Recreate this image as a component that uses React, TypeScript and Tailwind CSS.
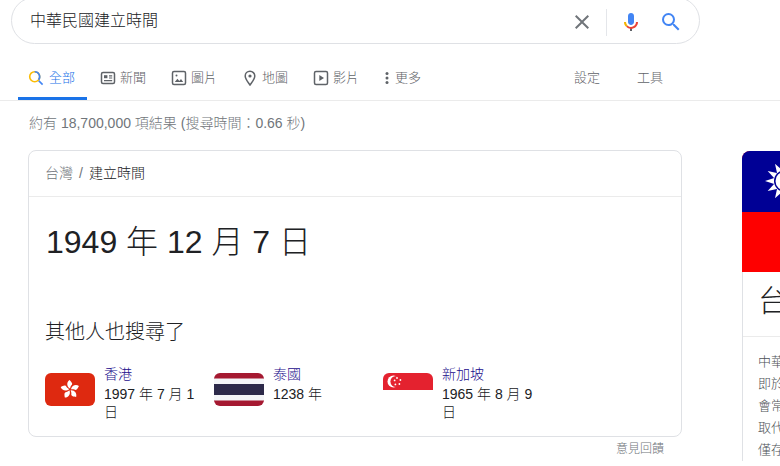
const FONT = '[font-family:Arial,"Liberation_Sans","Noto_Sans_CJK_TC",sans-serif]'

const tabs = [
  { label: '新聞', icon: <NewsIcon />, width: 'w-[71px]' },
  { label: '圖片', icon: <ImageIcon />, width: 'w-[71px]' },
  { label: '地圖', icon: <PinIcon />, width: 'w-[71px]' },
  { label: '影片', icon: <VideoIcon />, width: 'w-[71px]' },
]

function NewsIcon() {
  return (
    <svg width="16" height="16" viewBox="0 0 16 16" fill="none" stroke="#5f6368" strokeWidth="1.5">
      <rect x="1.5" y="2.5" width="13" height="11" rx="1.5" />
      <rect x="4" y="5.2" width="3.4" height="3" fill="#5f6368" stroke="none" />
      <path d="M9 5.8h3.2M9 8h3.2M4 10.6h8.2" strokeWidth="1.2" />
    </svg>
  )
}

function ImageIcon() {
  return (
    <svg width="16" height="16" viewBox="0 0 16 16" fill="none" stroke="#5f6368" strokeWidth="1.5">
      <rect x="1.5" y="1.5" width="13" height="13" rx="1.5" />
      <path d="M3.8 12l2.6-3.2 1.9 2.1 1.7-1.9 2.2 3z" fill="#5f6368" stroke="none" />
      <circle cx="5.5" cy="5.5" r="1" fill="#5f6368" stroke="none" />
    </svg>
  )
}

function PinIcon() {
  return (
    <svg width="16" height="16" viewBox="0 0 16 16" fill="none" stroke="#5f6368" strokeWidth="1.5">
      <path d="M8 15C5.6 11.6 3.2 9 3.2 6a4.8 4.8 0 0 1 9.6 0c0 3-2.4 5.6-4.8 9z" />
      <circle cx="8" cy="6" r="1.6" fill="#5f6368" stroke="none" />
    </svg>
  )
}

function VideoIcon() {
  return (
    <svg width="16" height="16" viewBox="0 0 16 16" fill="none" stroke="#5f6368" strokeWidth="1.5">
      <rect x="1.5" y="1.5" width="13" height="13" rx="1.5" />
      <path d="M6.3 5v6L11 8z" fill="#5f6368" stroke="none" />
    </svg>
  )
}

function HongKongFlag() {
  return (
    <svg width="50" height="33" viewBox="0 0 50 33" className="shrink-0 mt-[6px]">
      <rect width="50" height="33" rx="6" fill="#de2910" />
      <g fill="#fff" transform="translate(25 16.5)">
        {[0, 72, 144, 216, 288].map((deg) => (
          <path key={deg} transform={`rotate(${deg})`} d="M0-1C-3.4-3-3.6-7.4-.6-9.6 1-8 3.4-6 1.4-4.2.6-3.4.3-2 0-1z" />
        ))}
      </g>
    </svg>
  )
}

function ThailandFlag() {
  return (
    <svg width="50" height="33" viewBox="0 0 50 33" className="shrink-0 mt-[6px]">
      <defs>
        <clipPath id="th-clip">
          <rect width="50" height="33" rx="6" />
        </clipPath>
      </defs>
      <g clipPath="url(#th-clip)">
        <rect width="50" height="33" fill="#a51931" />
        <rect y="5.5" width="50" height="22" fill="#f4f5f8" />
        <rect y="11" width="50" height="11" fill="#2d2a4a" />
      </g>
    </svg>
  )
}

function SingaporeFlag() {
  return (
    <svg width="50" height="17" viewBox="0 0 50 17" className="shrink-0 mt-[6px]">
      <path d="M0 17V6a6 6 0 0 1 6-6h38a6 6 0 0 1 6 6v11z" fill="#e4222f" />
      <circle cx="10.5" cy="8.5" r="6" fill="#fff" />
      <circle cx="13" cy="8.5" r="5.6" fill="#e4222f" />
      <g fill="#fff">
        <circle cx="14" cy="5" r="0.9" />
        <circle cx="17.4" cy="7" r="0.9" />
        <circle cx="16.4" cy="11" r="0.9" />
        <circle cx="12.4" cy="11.4" r="0.9" />
        <circle cx="11.6" cy="7.4" r="0.9" />
      </g>
    </svg>
  )
}

const related = [
  { name: '香港', date: '1997 年 7 月 1 日', flag: <HongKongFlag />, width: 'w-[169px]' },
  { name: '泰國', date: '1238 年', flag: <ThailandFlag />, width: 'w-[169px]' },
  { name: '新加坡', date: '1965 年 8 月 9 日', flag: <SingaporeFlag />, width: 'w-[169px]' },
]

export default function App() {
  return (
    <div className={`${FONT} w-[780px] h-[466px] overflow-hidden bg-white text-[#202124] font-light`}>
      <header className="flow-root h-[101px] border-b border-[#ebebeb]">
        <div className="ml-[11px] mt-[-3px] w-[689px] h-[47px] rounded-[24px] border border-[#dfe1e5] flex items-center pl-[18px] pr-[16px]">
          <span className="text-base flex-1">中華民國建立時間</span>
          <svg width="24" height="24" viewBox="0 0 24 24" fill="#70757a" className="mt-[3px]">
            <path d="M19 6.41L17.59 5 12 10.59 6.41 5 5 6.41 10.59 12 5 17.59 6.41 19 12 13.41 17.59 19 19 17.59 13.41 12z" />
          </svg>
          <div className="ml-[12px] mr-[12px] mt-[3px] w-px h-[27px] bg-[#e4e6ea]" />
          <svg width="24" height="24" viewBox="0 0 24 24" className="mt-[3px]">
            <path d="M12 15c1.66 0 3-1.31 3-2.97V5.97C15 4.31 13.66 3 12 3S9 4.31 9 5.97v6.06C9 13.69 10.34 15 12 15z" fill="#4285f4" />
            <path d="M11 18.08h2V21h-2z" fill="#5f6368" />
            <path d="M7.05 16.87A6.96 6.96 0 0 0 12 19v-2a5 5 0 0 1-3.54-1.54z" fill="#ea4335" />
            <path d="M12 17v2c3.87 0 7-3.13 7-6.92h-2A4.99 4.99 0 0 1 12 17z" fill="#ea4335" />
            <path d="M5 12.08c0 1.9.77 3.6 2.05 4.79l1.41-1.41A4.9 4.9 0 0 1 7 12.08z" fill="#f4b400" />
          </svg>
          <svg width="24" height="24" viewBox="0 0 24 24" fill="#4285f4" className="ml-[16px] mt-[3px]">
            <path d="M15.5 14h-.79l-.28-.27A6.47 6.47 0 0 0 16 9.5 6.5 6.5 0 1 0 9.5 16c1.61 0 3.09-.59 4.23-1.57l.27.28v.79l5 4.99L20.49 19l-4.99-5zm-6 0C7.01 14 5 11.99 5 9.5S7.01 5 9.5 5 14 7.01 14 9.5 11.99 14 9.5 14z" />
          </svg>
        </div>

        <nav className="ml-[18px] mt-[25px] flex h-[31px] text-[13px] text-[#5f6368]">
          <div className="w-[69px] h-[31px] border-b-[3px] border-[#1a73e8] flex items-start pl-[10px] gap-[5px] text-[#1a73e8]">
            <svg width="16" height="16" viewBox="0 0 16 16" fill="none" strokeWidth="1.6" className="mt-[1px]">
              <path d="M10.6 10.6l4 4" stroke="#4285f4" />
              <circle cx="6.7" cy="6.7" r="5" stroke="#fbbc05" />
              <path d="M6.7 1.7a5 5 0 0 1 3.9 8.1" stroke="#4285f4" />
            </svg>
            <span className="leading-[18px]">全部</span>
          </div>
          <div className="flex ml-[13px]">
            {tabs.map((tab) => (
              <div key={tab.label} className={`${tab.width} flex items-start gap-[4px]`}>
                <span className="mt-[1px]">{tab.icon}</span>
                <span className="leading-[18px]">{tab.label}</span>
              </div>
            ))}
          </div>
          <div className="flex items-start gap-[5px]">
            <svg width="6" height="16" viewBox="0 0 6 16" fill="#5f6368" className="mt-[1px]">
              <circle cx="3" cy="3.5" r="1.5" />
              <circle cx="3" cy="8" r="1.5" />
              <circle cx="3" cy="12.5" r="1.5" />
            </svg>
            <span className="leading-[18px]">更多</span>
          </div>
          <span className="leading-[18px] ml-[153px]">設定</span>
          <span className="leading-[18px] ml-[37px]">工具</span>
        </nav>
      </header>

      <p className="ml-[29px] mt-[13px] h-[18px] text-[14px] leading-[18px] text-[#70757a]">
        約有 18,700,000 項結果 (搜尋時間：0.66 秒)
      </p>

      <main className="flex items-start mt-[18px] ml-[28px]">
        <div className="w-[654px] shrink-0">
          <section className="h-[287px] rounded-lg border border-[#dfe1e5]">
            <div className="h-[46px] border-b border-[#ebebeb] pl-[16px] flex items-center gap-[6px] text-[14px]">
              <span className="text-[#70757a]">台灣</span>
              <span className="text-[#70757a]">/</span>
              <span>建立時間</span>
            </div>
            <div className="pl-[16px] pt-[24px]">
              <div className="text-[32px] leading-[42px] ml-[1px]">1949 年 12 月 7 日</div>
              <h2 className="mt-[56px] text-[20px] leading-[26px] font-light">其他人也搜尋了</h2>
              <div className="flex mt-[22px]">
                {related.map((item) => (
                  <div key={item.name} className={`${item.width} flex items-start`}>
                    {item.flag}
                    <div className="ml-[9px] w-[100px] text-[14px] leading-[18px] mt-[-2px]">
                      <div className="text-[#1a0d8b] mb-[2px]">{item.name}</div>
                      <div>{item.date}</div>
                    </div>
                  </div>
                ))}
              </div>
            </div>
          </section>
          <div className="text-right text-[12px] leading-[16px] text-[#70757a] pr-[18px] mt-[4px]">意見回饋</div>
        </div>

        <aside className="ml-[60px] mt-[1px] w-[369px] shrink-0 rounded-t-lg overflow-hidden">
          <svg width="369" height="121" viewBox="0 0 369 121" className="block">
            <rect width="369" height="121" fill="#fe0000" />
            <rect width="369" height="61" fill="#000095" />
            <g fill="#fff" transform="translate(43 30)">
              {[0, 30, 60, 90, 120, 150, 180, 210, 240, 270, 300, 330].map((deg) => (
                <path key={deg} transform={`rotate(${deg})`} d="M-3.2-10L0-20 3.2-10z" />
              ))}
              <circle r="11" fill="#000095" />
              <circle r="9.5" />
            </g>
          </svg>
          <div className="border-l border-[#dfe1e5]">
            <div className="h-[65px] border-b border-[#ebebeb] pl-[15px] text-[30px] leading-[58px]">台灣</div>
            <div className="pl-[15px] pt-[14px] text-[13px] leading-[22px] text-[#4d5156] whitespace-nowrap">
              <div>中華民國，通稱台灣</div>
              <div>即於東亞的主權國家</div>
              <div>會常見於國際場合</div>
              <div>取代了原本的席位</div>
              <div>僅存少數邦交國</div>
            </div>
          </div>
        </aside>
      </main>
    </div>
  )
}
